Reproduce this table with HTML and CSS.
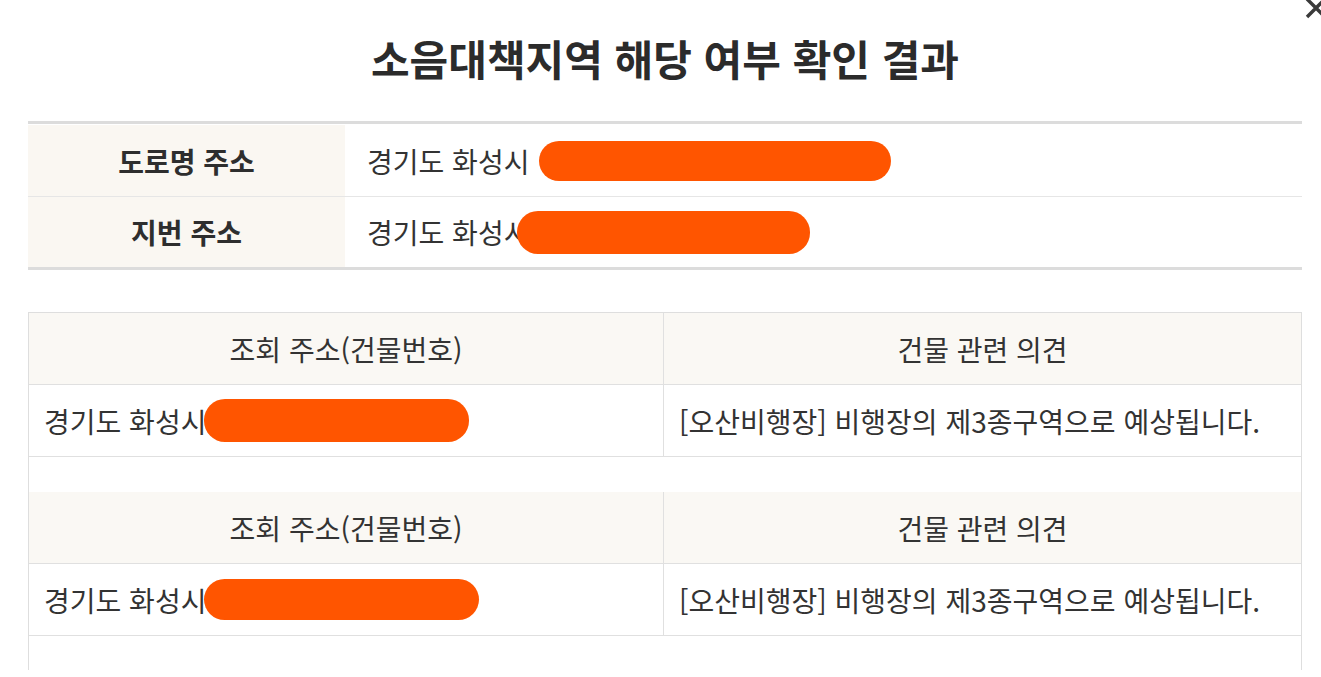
FILE: index.html
```html
<!DOCTYPE html>
<html lang="ko">
<head>
<meta charset="utf-8">
<title>소음대책지역 해당 여부 확인 결과</title>
<link rel="stylesheet" href="styles.css">
</head>
<body>
<div class="popup">
  <button class="close" aria-label="닫기">
    <svg width="24" height="24" viewBox="0 0 24 24"><path d="M3 3 L21 21 M21 3 L3 21" stroke="#3a3a3a" stroke-width="3.4" fill="none"/></svg>
  </button>
  <h1 class="title">소음대책지역 해당 여부 확인 결과</h1>

  <div class="addr-table">
    <div class="addr-row">
      <div class="addr-head">도로명 주소</div>
      <div class="addr-val">경기도 화성시 <span class="redact r1"></span></div>
    </div>
    <div class="addr-row">
      <div class="addr-head">지번 주소</div>
      <div class="addr-val">경기도 화성시<span class="redact r2"></span></div>
    </div>
  </div>

  <div class="result-box">
    <div class="result">
      <div class="res-row res-head">
        <div class="cell">조회 주소(건물번호)</div>
        <div class="cell">건물 관련 의견</div>
      </div>
      <div class="res-row res-data">
        <div class="cell">경기도 화성시<span class="redact r3"></span></div>
        <div class="cell">[오산비행장] 비행장의 제3종구역으로 예상됩니다.</div>
      </div>
    </div>
    <div class="result">
      <div class="res-row res-head">
        <div class="cell">조회 주소(건물번호)</div>
        <div class="cell">건물 관련 의견</div>
      </div>
      <div class="res-row res-data">
        <div class="cell">경기도 화성시<span class="redact r4"></span></div>
        <div class="cell">[오산비행장] 비행장의 제3종구역으로 예상됩니다.</div>
      </div>
    </div>
  </div>
</div>
</body>
</html>
```

FILE: styles.css
```css
* { box-sizing: border-box; }
html, body {
  margin: 0;
  padding: 0;
  background: #fff;
  height: 100%;
  overflow: hidden;
}
body {
  font-family: "Noto Sans CJK KR", "Noto Sans", sans-serif;
  color: #333;
}
.popup {
  position: relative;
  padding: 0 19px 0 28px;
  height: 100%;
}
.close {
  position: absolute;
  top: -4px;
  right: -7px;
  border: 0;
  background: none;
  padding: 0;
  width: 24px;
  height: 24px;
  line-height: 0;
}
.title {
  margin: 0;
  padding-top: 28px;
  height: 121px;
  text-align: center;
  font-size: 42px;
  line-height: 60px;
  font-weight: 700;
  color: #2b2b2b;
}
.addr-table {
  border-top: 3px solid #dcdcdc;
  border-bottom: 3px solid #dcdcdc;
  padding-top: 1px;
}
.addr-row {
  display: grid;
  grid-template-columns: 317px 1fr;
  height: 71px;
}
.addr-row + .addr-row {
  border-top: 1px solid #e6e6e6;
  height: 71px;
}
.addr-head {
  background: #faf7f2;
  display: flex;
  align-items: center;
  justify-content: center;
  font-size: 28px;
  font-weight: 700;
  color: #2e2e2e;
}
.addr-val {
  display: flex;
  align-items: center;
  padding-left: 22px;
  font-size: 28px;
  white-space: pre;
}
.redact {
  display: inline-block;
  background: #ff5500;
  border-radius: 21px;
}
.r1 { width: 352px; height: 40px; margin-left: 2px; }
.r2 { width: 293px; height: 43px; margin-left: -12px; }
.r3 { width: 265px; height: 43px; margin-left: -2px; }
.r4 { width: 275px; height: 41px; margin-left: -2px; }

.result-box {
  margin-top: 42px;
  border: 1px solid #dedede;
  border-bottom: 0;
  height: 358px;
  display: flex;
  flex-direction: column;
  gap: 35px;
}
.res-row {
  display: grid;
  grid-template-columns: 635px 1fr;
  height: 72px;
  border-bottom: 1px solid #e0e0e0;
}
.res-head {
  background: #faf8f4;
}
.res-head .cell {
  display: flex;
  align-items: center;
  justify-content: center;
}
.res-data .cell {
  display: flex;
  align-items: center;
  padding-left: 15px;
}
.cell {
  font-size: 28px;
  color: #333;
}
.res-row .cell:first-child {
  border-right: 1px solid #e0e0e0;
}
```
